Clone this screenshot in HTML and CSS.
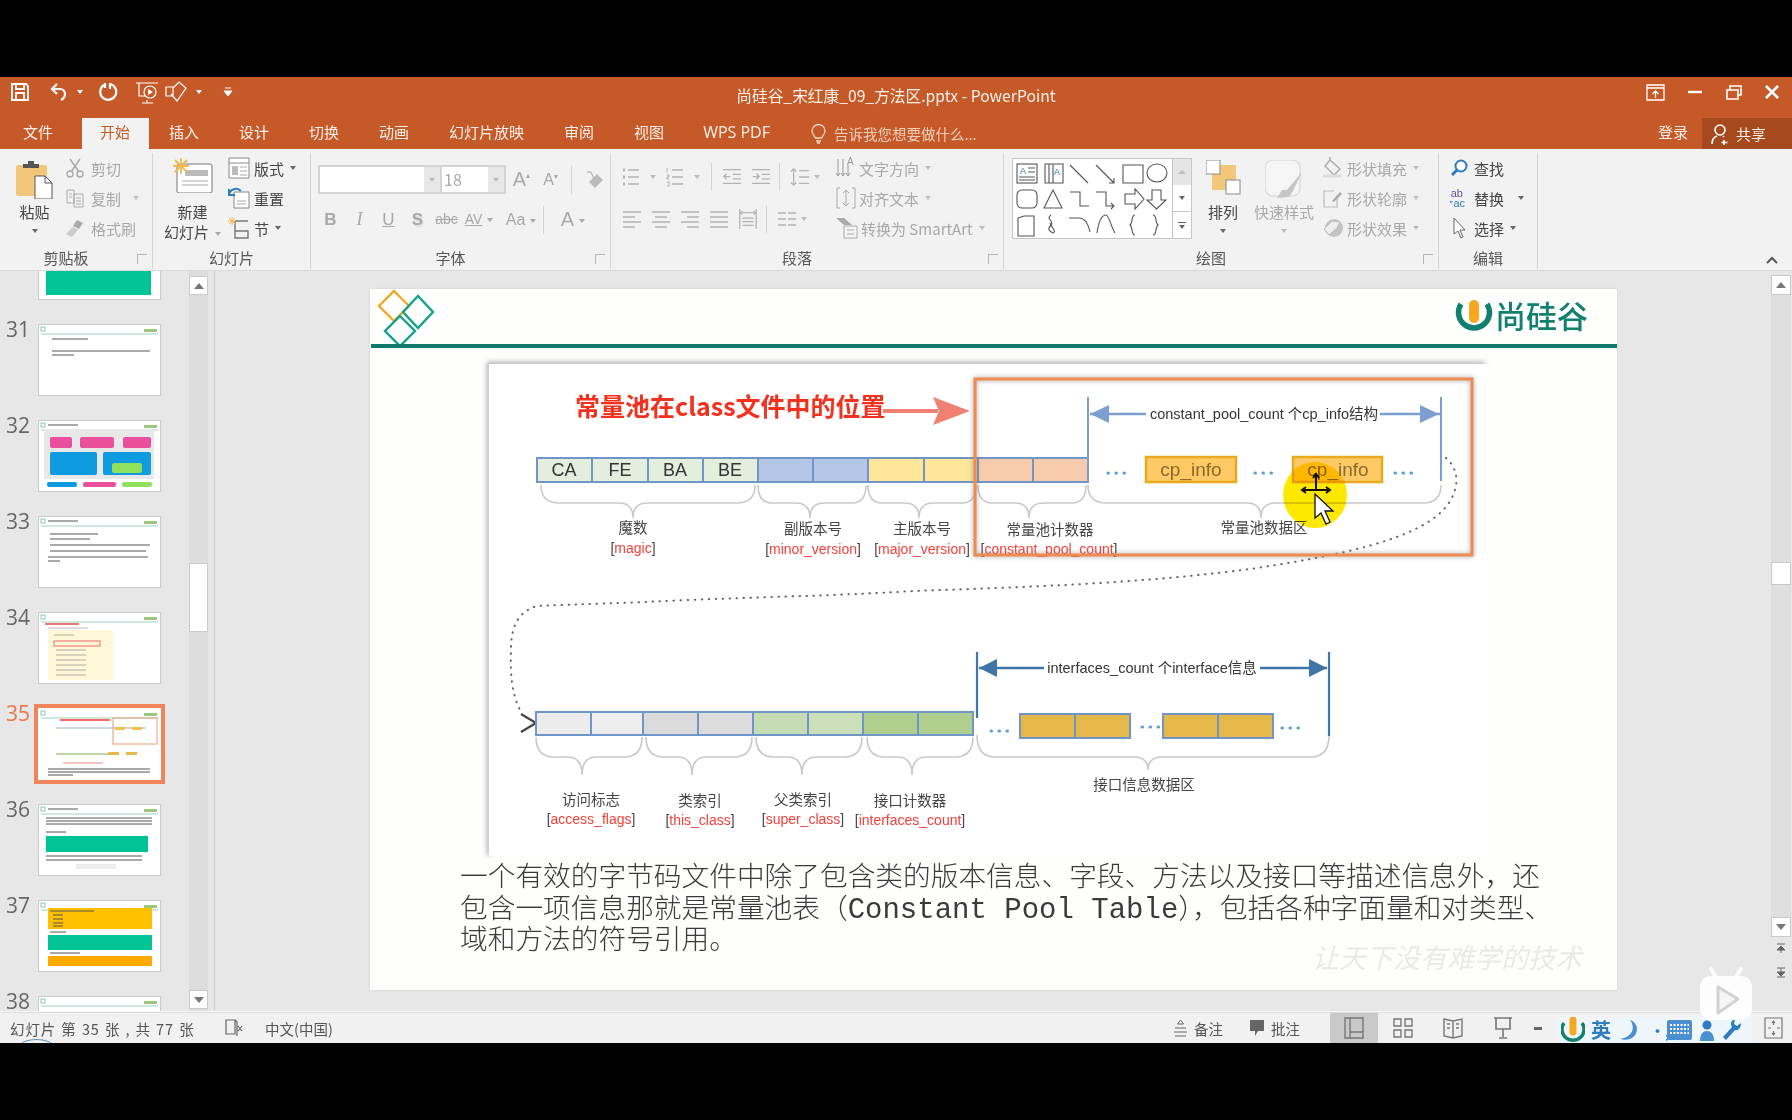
FILE: index.html
```html
<!DOCTYPE html>
<html>
<head>
    <meta charset="UTF-8">
    <title>尚硅谷_宋红康_09_方法区.pptx - PowerPoint</title>
    <link rel="stylesheet" href="styles.css">
</head>
<body>
<svg class="defs" width="0" height="0">
    <symbol id="bullets" viewBox="0 0 20 20"><path d="M2 3h2M2 10h2M2 17h2" stroke-width="3"/><path d="M7 3h11M7 10h11M7 17h11"/></symbol>
    <symbol id="numbers" viewBox="0 0 20 20"><path d="M2 1v4M2 8h2v2H2v2h2M2 15h2v4H2" stroke-width="1"/><path d="M7 3h11M7 10h11M7 17h11"/></symbol>
    <symbol id="outdent" viewBox="0 0 22 20"><path d="M1 2h20M12 7h9M12 12h9M1 17h20"/><path d="M9 9.5H2M5 6.5l-3 3 3 3"/></symbol>
    <symbol id="indent" viewBox="0 0 22 20"><path d="M1 2h20M12 7h9M12 12h9M1 17h20"/><path d="M2 9.5h7M6 6.5l3 3-3 3"/></symbol>
    <symbol id="spacing" viewBox="0 0 22 22"><path d="M10 4h11M10 11h11M10 18h11M4 2v18M1 5l3-3 3 3M1 17l3 3 3-3"/></symbol>
    <symbol id="left" viewBox="0 0 20 20"><path d="M1 3h18M1 8h12M1 13h18M1 18h12"/></symbol>
    <symbol id="center" viewBox="0 0 20 20"><path d="M1 3h18M4 8h12M1 13h18M4 18h12"/></symbol>
    <symbol id="right" viewBox="0 0 20 20"><path d="M1 3h18M7 8h12M1 13h18M7 18h12"/></symbol>
    <symbol id="justify" viewBox="0 0 20 20"><path d="M1 3h18M1 8h18M1 13h18M1 18h18"/></symbol>
    <symbol id="columns" viewBox="0 0 20 20"><path d="M1 4h8M11 4h8M1 10h8M11 10h8M1 16h8M11 16h8"/></symbol>
    <symbol id="distribute" viewBox="0 0 22 24"><path d="M2 1v22M20 1v22M5 5h12M5 3l-2 2 2 2M17 3l2 2-2 2M5 11h12M5 15h12M5 19h12"/></symbol>
    <symbol id="thumb-head" viewBox="0 0 123 72">
        <rect x="3" y="3" width="4" height="4" fill="none" stroke="#8fc9b8"/>
        <path d="M3 10h117" stroke="#bfe0d8" stroke-width="1.4"/>
        <rect x="106" y="5" width="13" height="3" fill="#9bc87a"/>
    </symbol>
</svg>

<div class="screen">
    <div class="band-top"></div>
    <div class="window">
        <div class="titlebar">
            <div class="qat">
                <svg class="qat-icon" width="20" height="20" viewBox="0 0 20 20"><path d="M2 2h14l2 2v14H2zM6 2v5h8V2M6 18v-7h8v7" fill="none" stroke="#fff" stroke-width="1.8"/></svg>
                <svg class="qat-icon undo" width="20" height="20" viewBox="0 0 20 20"><path d="M8 2L3 7l5 5M3 7h8a5 5 0 0 1 5 5c0 3-2 5-4 6" fill="none" stroke="#fff" stroke-width="2.2"/></svg>
                <span class="caret caret-white"></span>
                <svg class="qat-icon redo" width="20" height="20" viewBox="0 0 20 20"><path d="M12 2a8 8 0 1 1-6 1M12 1v6M7 1v5" fill="none" stroke="#fff" stroke-width="2.2"/></svg>
                <svg class="qat-icon present" width="24" height="24" viewBox="0 0 24 24"><path d="M1 3h22M4 3v13h6M12 20v3M7 23h11" fill="none" stroke="#fff" stroke-width="1.2"/><circle cx="15" cy="12" r="6" fill="none" stroke="#fff" stroke-width="1.2"/><path d="M13 9l5 3-5 3z" fill="#fff"/></svg>
                <svg class="qat-icon" width="24" height="24" viewBox="0 0 24 24"><path d="M2 7h7v9H2zM9 8l6-6 7 6-9 13-6-7" fill="none" stroke="#fff" stroke-width="1.2"/></svg>
                <span class="caret caret-white"></span>
                <svg class="qat-icon custom" width="12" height="12" viewBox="0 0 12 12"><path d="M3 2h6M2 5h8l-4 5z" stroke="#fff" fill="#fff"/></svg>
            </div>
            <div class="doc-title">尚硅谷_宋红康_09_方法区.pptx - PowerPoint</div>
            <div class="win-controls">
                <svg width="19" height="17" viewBox="0 0 19 17"><path d="M1 1h17v15H1zM1 4h17M9.5 14V7M6.5 10l3-3 3 3" fill="none" stroke="#fff" stroke-width="1.3"/></svg>
                <svg class="win-min" width="14" height="4" viewBox="0 0 14 4"><path d="M0 2h14" stroke="#fff" stroke-width="2.4"/></svg>
                <svg class="win-max" width="16" height="15" viewBox="0 0 16 15"><path d="M1 5h11v9H1zM4 5V1h11v9h-3" fill="none" stroke="#fff" stroke-width="1.6"/></svg>
                <svg class="win-close" width="14" height="14" viewBox="0 0 14 14"><path d="M1 1l12 12M13 1L1 13" stroke="#fff" stroke-width="2.6"/></svg>
            </div>
        </div>

        <div class="tabs">
            <div class="tab">文件</div>
            <div class="tab tab-active">开始</div>
            <div class="tab">插入</div>
            <div class="tab">设计</div>
            <div class="tab">切换</div>
            <div class="tab">动画</div>
            <div class="tab">幻灯片放映</div>
            <div class="tab">审阅</div>
            <div class="tab">视图</div>
            <div class="tab tab-wps">WPS PDF</div>
            <div class="tell-me">
                <svg width="15" height="20" viewBox="0 0 15 20"><path d="M4.5 14C3 11 1 10 1 7a6.5 6.5 0 0 1 13 0c0 3-2 4-3.5 7zM5 17h5M6 19h3" fill="none" stroke="#f5d9c8" stroke-width="1.3"/></svg>
                <span>告诉我您想要做什么...</span>
            </div>
            <div class="login">登录</div>
            <div class="share">
                <svg width="19" height="22" viewBox="0 0 19 22"><circle cx="9" cy="7" r="5" fill="none" stroke="#fff" stroke-width="1.6"/><path d="M1 21c0-4 2-7 5-8M12 13l1 1M13 17v5M10.5 19.5h6" fill="none" stroke="#fff" stroke-width="1.6"/></svg>
                <span>共享</span>
            </div>
        </div>

        <div class="ribbon">
            <!-- 剪贴板 -->
            <div class="group group-clip">
                <div class="group-body">
                    <div class="big-btn paste">
                        <svg width="37" height="38" viewBox="0 0 37 38"><rect x="0" y="4" width="31" height="31" rx="2" fill="#f3c77a"/><path d="M7 7h16V3h-5V0h-6v3H7z" fill="#555"/><path d="M19 15h10l7 7v16H19z" fill="#fff" stroke="#555"/><path d="M29 15v7h7" fill="none" stroke="#555"/></svg>
                        <span class="big-label paste-label">粘贴</span>
                        <span class="caret big-caret"></span>
                    </div>
                    <div class="small-col clip-col muted">
                        <div class="tool-row"><svg class="tool-icon" width="20" height="20" viewBox="0 0 20 20"><path d="M5 1l9 13M15 1L6 14" stroke="#aaa" stroke-width="1.5"/><circle cx="5" cy="16" r="3" fill="none" stroke="#aaa" stroke-width="1.4"/><circle cx="15" cy="16" r="3" fill="none" stroke="#aaa" stroke-width="1.4"/></svg><span>剪切</span></div>
                        <div class="tool-row"><svg class="tool-icon" width="20" height="20" viewBox="0 0 20 20"><path d="M2 2h7v13H2zM9 6h9v13H9zM4 6h3M4 9h3M11 10h5M11 13h5M11 16h5" fill="none" stroke="#aaa"/></svg><span>复制</span><span class="caret clip-caret"></span></div>
                        <div class="tool-row"><svg class="tool-icon" width="20" height="20" viewBox="0 0 20 20"><path d="M12 2l6 3-4 6-6-3z" fill="#aaa"/><path d="M8 9l5 3-6 7-6-3z" fill="#ccc"/></svg><span>格式刷</span></div>
                    </div>
                </div>
                <div class="group-label label-launch">剪贴板</div>
                <span class="launcher"></span>
            </div>

            <!-- 幻灯片 -->
            <div class="group group-slides">
                <div class="group-body">
                    <div class="big-btn new-slide">
                        <svg width="40" height="35" viewBox="0 0 40 35"><rect x="4" y="6" width="35" height="29" rx="2" fill="#fff" stroke="#777"/><rect x="12" y="12" width="23" height="6" fill="#bbb"/><path d="M9 23h26M9 27h26" stroke="#aaa"/><path d="M8 0v16M0 8h16M2 2l12 12M14 2L2 14" stroke="#f0b952" stroke-width="1.8"/></svg>
                        <span class="big-label new-label">新建</span>
                        <span class="big-label">幻灯片<span class="caret inline-caret"></span></span>
                    </div>
                    <div class="small-col slides-col">
                        <div class="tool-row"><svg class="tool-icon" width="22" height="22" viewBox="0 0 22 22"><path d="M1 1h20v20H1z" fill="#fff" stroke="#888"/><path d="M1 6h20" stroke="#888"/><rect x="4" y="9" width="6" height="9" fill="#bbb"/><path d="M12 10h7M12 14h7M12 18h7" stroke="#aaa"/></svg><span>版式</span><span class="caret"></span></div>
                        <div class="tool-row"><svg class="tool-icon" width="22" height="22" viewBox="0 0 22 22"><path d="M6 5h15v16H6z" fill="#fff" stroke="#888"/><path d="M9 14h9M9 17h9" stroke="#aaa"/><path d="M1 8a7 7 0 0 1 12-4M1 2v6h6" fill="none" stroke="#2e7cc0" stroke-width="2"/></svg><span>重置</span></div>
                        <div class="tool-row"><svg class="tool-icon" width="22" height="22" viewBox="0 0 22 22"><path d="M7 4h13M7 4v17h13v-7H7" fill="none" stroke="#777" stroke-width="1.4"/><path d="M4 0v8M0 4h8M1 1l6 6M7 1L1 7" stroke="#f0b952"/></svg><span>节</span><span class="caret"></span></div>
                    </div>
                </div>
                <div class="group-label">幻灯片</div>
            </div>

            <!-- 字体 -->
            <div class="group group-font muted-icons">
                <div class="group-body font-body">
                    <div class="font-row font-row-top">
                        <div class="combo combo-name"><div class="combo-field"></div><div class="combo-arrow"><span class="caret"></span></div></div>
                        <div class="combo combo-size"><div class="combo-field">18</div><div class="combo-arrow"><span class="caret"></span></div></div>
                        <div class="slot glyph glyph-grow">A<sup>▴</sup></div>
                        <div class="slot glyph glyph-shrink">A<sup>▾</sup></div>
                        <span class="vsep"></span>
                        <div class="slot eraser"><svg width="20" height="20" viewBox="0 0 20 20"><path d="M5 12l8-8 6 6-8 8z" fill="#bbb"/><path d="M3 2h4l3 7" fill="none" stroke="#aaa"/></svg></div>
                    </div>
                    <div class="font-row font-row-bottom">
                        <div class="slot fmt fmt-bold">B</div>
                        <div class="slot fmt fmt-italic">I</div>
                        <div class="slot fmt fmt-under">U</div>
                        <div class="slot fmt fmt-shadow">S</div>
                        <div class="slot fmt fmt-strike">abc</div>
                        <div class="slot fmt fmt-av">AV<span class="caret inline-caret"></span></div>
                        <div class="slot fmt fmt-aa">Aa<span class="caret inline-caret"></span></div>
                        <span class="vsep vsep-tall"></span>
                        <div class="slot fmt fmt-color">A<span class="caret inline-caret"></span></div>
                    </div>
                </div>
                <div class="group-label label-launch">字体</div>
                <span class="launcher"></span>
            </div>

            <!-- 段落 -->
            <div class="group group-para">
                <div class="group-body">
                    <div class="para-left">
                        <div class="para-row para-row-top">
                            <div class="pslot"><svg class="line-icon"><use href="#bullets"/></svg></div><span class="cslot"><span class="caret"></span></span>
                            <div class="pslot"><svg class="line-icon"><use href="#numbers"/></svg></div><span class="cslot"><span class="caret"></span></span>
                            <span class="vsep vsep-para"></span>
                            <div class="pslot pslot-wide"><svg class="line-icon"><use href="#outdent"/></svg></div>
                            <div class="pslot pslot-wide"><svg class="line-icon"><use href="#indent"/></svg></div>
                            <span class="vsep vsep-para"></span>
                            <div class="pslot pslot-wide"><svg class="line-icon"><use href="#spacing"/></svg></div><span class="caret"></span>
                        </div>
                        <div class="para-row para-row-bottom">
                            <div class="pslot pslot-wide"><svg class="line-icon"><use href="#left"/></svg></div>
                            <div class="pslot pslot-wide"><svg class="line-icon"><use href="#center"/></svg></div>
                            <div class="pslot pslot-wide"><svg class="line-icon"><use href="#right"/></svg></div>
                            <div class="pslot pslot-wide"><svg class="line-icon"><use href="#justify"/></svg></div>
                            <div class="pslot pslot-wide"><svg class="line-icon line-tall"><use href="#distribute"/></svg></div>
                            <span class="vsep vsep-para"></span>
                            <div class="pslot pslot-wide"><svg class="line-icon"><use href="#columns"/></svg></div><span class="caret"></span>
                        </div>
                    </div>
                    <div class="small-col para-col muted">
                        <div class="tool-row"><svg class="tool-icon" width="20" height="22" viewBox="0 0 20 22"><path d="M2 2v16M7 2v16M12 8v10M0 16l2 3 2-3M5 16l2 3 2-3M10 16l2 3 2-3" fill="none" stroke="#999"/><text class="mini-a" x="11" y="8">A</text></svg><span>文字方向</span><span class="caret"></span></div>
                        <div class="tool-row"><svg class="tool-icon" width="20" height="22" viewBox="0 0 20 22"><path d="M4 1H1v20h3M16 1h3v20h-3M10 3v16M7 6l3-3 3 3M7 16l3 3 3-3" fill="none" stroke="#aaa"/></svg><span>对齐文本</span><span class="caret"></span></div>
                        <div class="tool-row"><svg class="tool-icon" width="22" height="22" viewBox="0 0 22 22"><path d="M0 1h8l8 7H8z" fill="#aaa"/><path d="M8 9h13v12H8zM11 13h7M11 17h7" fill="#f5f5f5" stroke="#aaa"/></svg><span>转换为 SmartArt</span><span class="caret"></span></div>
                    </div>
                </div>
                <div class="group-label label-launch">段落</div>
                <span class="launcher"></span>
            </div>

            <!-- 绘图 -->
            <div class="group group-draw">
                <div class="group-body">
                    <div class="gallery">
                        <svg class="gallery-shapes" width="160" height="80" viewBox="0 0 160 80">
                            <rect x="4" y="5" width="20" height="19" fill="#fff"/>
                            <text class="mini-blue" x="7" y="15">A</text>
                            <path d="M15 9h7M15 13h7M6 18h16M6 21h16M32 5h18v19H32zM36 5v19M40 5v19M57 6l18 18M83 6l18 18M96 24h5v-5M110 6h20v18h-20z"/>
                            <text class="mini-blue" x="41" y="16">A</text>
                            <ellipse cx="144" cy="14" rx="10" ry="9"/>
                            <rect x="4" y="31" width="20" height="18" rx="5"/>
                            <path d="M40 31l-9 18h18zM57 33h10v14h9M83 33h10v14h8M98 44l3 3-3 3M112 35h10v-5l9 10-9 10v-5h-10zM139 31h9v10h5l-9.5 9-9.5-9h5z"/>
                            <path d="M5 59l6-2h10v20H5zM38 56c-6 4 4 6 0 10s-2 6 2 8c4-2-2-6-3-10M56 59h10c6 0 9 5 11 14M84 74c2-14 6-18 9-18s5 12 9 18M122 56c-4 0-2 8-5 10 3 2 1 10 5 10M140 56c4 0 2 8 5 10-3 2-1 10-5 10"/>
                        </svg>
                        <div class="gallery-spin">
                            <div class="spin spin-up"><span class="tri tri-up"></span></div>
                            <div class="spin spin-mid"><span class="caret"></span></div>
                            <div class="spin spin-more"><span class="more-line"></span><span class="caret"></span></div>
                        </div>
                    </div>
                    <div class="big-btn arrange">
                        <svg width="35" height="35" viewBox="0 0 35 35"><rect x="6" y="5" width="24" height="25" fill="#f3c77a"/><rect x="0" y="0" width="14" height="14" fill="#fff" stroke="#888"/><rect x="20" y="20" width="14" height="14" fill="#fff" stroke="#888"/></svg>
                        <span class="big-label big-label-tight">排列</span>
                        <span class="caret big-caret"></span>
                    </div>
                    <div class="big-btn quick muted">
                        <svg width="38" height="40" viewBox="0 0 38 40"><rect x="0" y="0" width="35" height="36" rx="8" fill="#f5f5f5" stroke="#ddd" stroke-width="1.5"/><path d="M37 12L22 30l-5 0-5 8 12-1 4-6z" fill="#c6c6c6"/></svg>
                        <span class="big-label big-label-tight">快速样式</span>
                        <span class="caret big-caret"></span>
                    </div>
                    <div class="small-col draw-col muted">
                        <div class="tool-row"><svg class="tool-icon" width="22" height="22" viewBox="0 0 22 22"><path d="M8 3l10 9-6 6-9-9zM8 3V0" fill="none" stroke="#aaa" stroke-width="1.4"/><path d="M1 19h18" stroke="#ddd" stroke-width="3"/></svg><span>形状填充</span><span class="caret"></span></div>
                        <div class="tool-row"><svg class="tool-icon" width="22" height="22" viewBox="0 0 22 22"><path d="M12 4H2v16h13V11" fill="none" stroke="#bbb" stroke-width="1.2"/><path d="M10 14l8-9 2 2-8 8z" fill="#aaa"/></svg><span>形状轮廓</span><span class="caret"></span></div>
                        <div class="tool-row"><svg class="tool-icon" width="22" height="22" viewBox="0 0 22 22"><circle cx="12" cy="11" r="9" fill="#c4c4c4"/><path d="M2 12l8-8 8 1-3 6-8 7z" fill="#eee" stroke="#bbb"/></svg><span>形状效果</span><span class="caret"></span></div>
                    </div>
                </div>
                <div class="group-label label-launch">绘图</div>
                <span class="launcher"></span>
            </div>

            <!-- 编辑 -->
            <div class="group group-edit">
                <div class="group-body">
                    <div class="small-col edit-col">
                        <div class="tool-row"><svg class="tool-icon" width="18" height="18" viewBox="0 0 18 18"><circle cx="11" cy="7" r="5.5" fill="#fff" stroke="#2e7cc0" stroke-width="2"/><path d="M7 11l-5 5" stroke="#2e7cc0" stroke-width="3"/></svg><span>查找</span></div>
                        <div class="tool-row"><svg class="tool-icon" width="22" height="22" viewBox="0 0 22 22"><text class="mini-ab" x="2" y="10">ab</text><text class="mini-ac" x="5" y="21">ac</text><path d="M1 15h3M1 15l2 2" stroke="#2e7cc0" fill="none"/></svg><span>替换</span><span class="caret edit-caret"></span></div>
                        <div class="tool-row"><svg class="tool-icon" width="14" height="22" viewBox="0 0 14 22"><path d="M2 1v16l4-3 3 7 2-1-3-7h5z" fill="#fff" stroke="#666"/></svg><span>选择</span><span class="caret"></span></div>
                    </div>
                </div>
                <div class="group-label">编辑</div>
            </div>
            <svg class="collapse" width="12" height="8" viewBox="0 0 12 8"><path d="M1 7l5-5 5 5" fill="none" stroke="#555" stroke-width="2"/></svg>
        </div>

        <div class="workspace">
            <div class="thumb-pane">
                <div class="thumb-list">
                    <div class="thumb-item">
                        <span class="thumb-no"></span>
                        <svg class="thumb" viewBox="0 0 123 72"><rect x="8" y="20" width="105" height="47" fill="#00c496"/></svg>
                    </div>
                    <div class="thumb-item">
                        <span class="thumb-no">31</span>
                        <svg class="thumb" viewBox="0 0 123 72"><use href="#thumb-head"/><path class="tline" d="M14 15h36M14 27h98M14 31h22"/></svg>
                    </div>
                    <div class="thumb-item">
                        <span class="thumb-no">32</span>
                        <svg class="thumb" viewBox="0 0 123 72"><use href="#thumb-head"/><path class="tline" d="M10 5h30"/>
                            <rect x="6" y="9" width="110" height="50" fill="#e8e8e8"/>
                            <rect x="12" y="17" width="22" height="11" rx="2" fill="#ea4f9d"/><rect x="42" y="17" width="34" height="11" rx="2" fill="#ea4f9d"/><rect x="85" y="17" width="28" height="11" rx="2" fill="#ea4f9d"/>
                            <rect x="12" y="32" width="47" height="23" rx="2" fill="#0f9be0"/><rect x="65" y="32" width="48" height="23" rx="2" fill="#0f9be0"/><rect x="74" y="43" width="30" height="10" rx="2" fill="#8fe05c"/>
                            <rect x="9" y="62" width="30" height="5" rx="2" fill="#0f9be0"/><rect x="45" y="62" width="33" height="5" rx="2" fill="#ea4f9d"/><rect x="84" y="62" width="30" height="5" rx="2" fill="#8fe05c"/>
                        </svg>
                    </div>
                    <div class="thumb-item">
                        <span class="thumb-no">33</span>
                        <svg class="thumb" viewBox="0 0 123 72"><use href="#thumb-head"/><path class="tline" d="M10 5h30M12 18h48M12 23h40M12 29h100M12 35h96M10 41h100M10 45h12"/></svg>
                    </div>
                    <div class="thumb-item">
                        <span class="thumb-no">34</span>
                        <svg class="thumb" viewBox="0 0 123 72"><use href="#thumb-head"/><path d="M7 12h34" stroke="#e44" stroke-width="1.5"/><path d="M10 16h40" stroke="#bbb"/>
                            <rect x="10" y="18" width="65" height="50" fill="#fff8d8"/><rect x="16" y="29" width="46" height="5" fill="none" stroke="#e66"/><path class="tline-thin" d="M16 23h20M18 38h30M18 43h30M18 48h30M18 53h30M18 58h30M18 63h30"/>
                        </svg>
                    </div>
                    <div class="thumb-item item-active">
                        <span class="thumb-no">35</span>
                        <svg class="thumb thumb-active" viewBox="0 0 123 72"><use href="#thumb-head"/>
                            <path d="M22 12h50" stroke="#f33" stroke-width="1.4"/>
                            <path d="M18 20h90" stroke="#bcd" stroke-width="1.6"/><rect x="75" y="10" width="44" height="26" fill="none" stroke="#ee9a70"/><rect x="77" y="19" width="10" height="3" fill="#f5c04a"/><rect x="94" y="19" width="10" height="3" fill="#f5c04a"/>
                            <path d="M18 46h60" stroke="#a5cc85" stroke-width="1.6"/><rect x="70" y="44" width="11" height="3" fill="#e5b84a"/><rect x="88" y="44" width="11" height="3" fill="#e5b84a"/>
                            <path d="M25 55h40" stroke="#e88" stroke-width="1"/>
                            <path class="tline" d="M10 61h102M10 64h102M10 67h25"/>
                        </svg>
                    </div>
                    <div class="thumb-item">
                        <span class="thumb-no">36</span>
                        <svg class="thumb" viewBox="0 0 123 72"><use href="#thumb-head"/><path class="tline" d="M10 5h30M8 14h106M8 17h106M8 20h106M8 28h20M8 52h96M8 56h96"/>
                            <rect x="8" y="32" width="102" height="16" fill="#00c496"/><rect x="38" y="60" width="40" height="5" fill="#eee"/>
                        </svg>
                    </div>
                    <div class="thumb-item">
                        <span class="thumb-no">37</span>
                        <svg class="thumb" viewBox="0 0 123 72"><use href="#thumb-head"/><rect x="10" y="8" width="104" height="21" fill="#ffc000"/><path class="tline" d="M12 11h44M15 15h10M15 19h10M15 23h10M15 26h10M12 32h16"/><rect x="10" y="35" width="104" height="15" fill="#00c496"/><path class="tline" d="M12 53h30"/><rect x="10" y="56" width="104" height="10" fill="#ffa800"/></svg>
                    </div>
                    <div class="thumb-item">
                        <span class="thumb-no">38</span>
                        <svg class="thumb" viewBox="0 0 123 72"><use href="#thumb-head"/></svg>
                    </div>
                </div>
                <div class="pane-scroll">
                    <div class="scroll-btn"><span class="tri tri-up"></span></div>
                    <div class="pane-scroll-track"><div class="pane-scroll-thumb"></div></div>
                    <div class="scroll-btn"><span class="tri tri-down"></span></div>
                </div>
            </div>

            <div class="stage">
                <div class="slide">
                    <svg class="diagram" width="1247" height="701" viewBox="370 289 1247 701">
                        <defs>
                            <filter id="soft" x="-5%" y="-5%" width="110%" height="110%"><feGaussianBlur stdDeviation="2.5"/></filter>
                        </defs>
                        <!-- 页眉 -->
                        <g fill="none" stroke-width="2.4">
                            <path d="M394 291l15 15-15 15-15-15z" stroke="#f0a928"/>
                            <path d="M418 296l15 16-15 16-15-16z" stroke="#14a08e"/>
                            <path d="M400 316l15 15-15 15-15-15z" stroke="#14a08e"/>
                        </g>
                        <path d="M371 346h1246" stroke="#0f7a6b" stroke-width="4"/>
                        <path d="M1461 304a15.500 15.500 0 1 0 26 0" fill="none" stroke="#11806f" stroke-width="5.500"/>
                        <path d="M1474 305v13" stroke="#f5a820" stroke-width="10" stroke-linecap="round"/>
                        <text class="logo-text" x="1495" y="328">尚硅谷</text>

                        <!-- 图片底板 -->
                        <path d="M489 855V364h996" fill="none" stroke="#888" stroke-width="3" filter="url(#soft)"/>
                        <rect x="489" y="364" width="1000" height="492" fill="#fff"/>

                        <text class="red-title" x="575" y="416">常量池在class文件中的位置</text>
                        <path d="M883 411h55" stroke="#f08072" stroke-width="4"/>
                        <path d="M933 397l37 14-37 14 6-14z" fill="#f08072"/>

                        <!-- 第一行字节 -->
                        <g class="cells">
                            <rect x="537" y="458" width="55" height="24" fill="#e3eedd"/><rect x="592" y="458" width="56" height="24" fill="#e3eedd"/><rect x="648" y="458" width="55" height="24" fill="#e3eedd"/><rect x="703" y="458" width="55" height="24" fill="#e3eedd"/>
                            <rect x="758" y="458" width="55" height="24" fill="#b4c7e7"/><rect x="813" y="458" width="55" height="24" fill="#b4c7e7"/>
                            <rect x="868" y="458" width="56" height="24" fill="#ffe699"/><rect x="924" y="458" width="54" height="24" fill="#ffe699"/>
                            <rect x="978" y="458" width="55" height="24" fill="#f8cbad"/><rect x="1033" y="458" width="55" height="24" fill="#f8cbad"/>
                        </g>
                        <g class="cell-text">
                            <text x="564" y="476">CA</text><text x="620" y="476">FE</text><text x="675" y="476">BA</text><text x="730" y="476">BE</text>
                        </g>
                        <g class="brace">
                            <path d="M541 485Q541 503 559 503H619Q633 503 633 518Q633 503 647 503H737Q755 503 755 485"/>
                            <path d="M758 485Q758 503 772 503H796Q810 503 810 518Q810 503 824 503H852Q866 503 866 485"/>
                            <path d="M868 485Q868 503 882 503H905Q919 503 919 518Q919 503 933 503H962Q976 503 976 485"/>
                            <path d="M978 485Q978 503 992 503H1015Q1029 503 1029 518Q1029 503 1043 503H1072Q1086 503 1086 485"/>
                            <path d="M1088 485Q1088 503 1106 503H1247Q1261 503 1261 518Q1261 503 1275 503H1423Q1441 503 1441 485"/>
                            <path d="M536 737Q536 757 554 757H568Q582 757 582 775Q582 757 596 757H624Q642 757 642 737"/>
                            <path d="M646 737Q646 757 664 757H678Q692 757 692 775Q692 757 706 757H734Q752 757 752 737"/>
                            <path d="M756 737Q756 757 774 757H788Q802 757 802 775Q802 757 816 757H844Q862 757 862 737"/>
                            <path d="M867 737Q867 757 885 757H898Q912 757 912 775Q912 757 926 757H955Q973 757 973 737"/>
                            <path d="M977 735Q977 757 995 757H1134Q1148 757 1148 770Q1148 757 1162 757H1311Q1329 757 1329 735"/>
                        </g>
                        <g class="cap">
                            <text x="633" y="533">魔数</text><text x="813" y="534">副版本号</text><text x="922" y="534">主版本号</text><text x="1050" y="535">常量池计数器</text><text x="1264" y="533">常量池数据区</text>
                            <text x="591" y="805">访问标志</text><text x="700" y="806">类索引</text><text x="803" y="805">父类索引</text><text x="910" y="806">接口计数器</text><text x="1144" y="790">接口信息数据区</text>
                        </g>
                        <g class="code">
                            <text x="633" y="553">[<tspan>magic</tspan>]</text><text x="813" y="554">[<tspan>minor_version</tspan>]</text><text x="922" y="554">[<tspan>major_version</tspan>]</text><text x="1049" y="554">[<tspan>constant_pool_count</tspan>]</text>
                            <text x="591" y="824">[<tspan>access_flags</tspan>]</text><text x="700" y="825">[<tspan>this_class</tspan>]</text><text x="803" y="824">[<tspan>super_class</tspan>]</text><text x="910" y="825">[<tspan>interfaces_count</tspan>]</text>
                        </g>

                        <!-- cp_info -->
                        <path d="M1088 397v84M1441 397v84" stroke="#7ba0d0" stroke-width="2"/>
                        <path d="M1090 414h350" stroke="#7ba0d0" stroke-width="2.5"/>
                        <path d="M1090 414l19-9v18zM1439 414l-19-9v18z" fill="#7ba0d0"/>
                        <rect x="1146" y="404" width="234" height="20" fill="#fff"/>
                        <text class="span-label" x="1264" y="419">constant_pool_count 个cp_info结构</text>
                        <rect class="cp" x="1146" y="457" width="90" height="25"/>
                        <rect class="cp" x="1293" y="457" width="89" height="25"/>
                        <text class="cp-text" x="1191" y="476">cp_info</text>
                        <text class="cp-text" x="1338" y="476">cp_info</text>
                        <path class="dots" d="M1108 473h20M1255 473h20M1395 473h20M991 731h20M1142 727h19M1282 728h20"/>

                        <!-- 虚线 -->
                        <path class="link" d="M1446 458C1460 470 1460 490 1445 508C1417 540 1340 555 1257 568C1150 583 1030 587 914 591C830 596 760 597 686 600C630 603 580 604 537 606C516 612 511 630 511 650C510 675 512 695 521 712"/>
                        <path d="M521 714l15 9-15 9" fill="none" stroke="#444" stroke-width="2.2"/>

                        <!-- 第二行 -->
                        <g class="cells">
                            <rect x="536" y="712" width="55" height="23" fill="#ececec"/><rect x="591" y="712" width="52" height="23" fill="#eeeeee"/>
                            <rect x="643" y="712" width="55" height="23" fill="#dbdbdb"/><rect x="698" y="712" width="55" height="23" fill="#dddddd"/>
                            <rect x="753" y="712" width="55" height="23" fill="#c6dcb4"/><rect x="808" y="712" width="55" height="23" fill="#cbdfba"/>
                            <rect x="863" y="712" width="55" height="23" fill="#aecf8e"/><rect x="918" y="712" width="55" height="23" fill="#aecf8e"/>
                        </g>
                        <path d="M977 652v66M1329 652v84" stroke="#3f75a8" stroke-width="2.2"/>
                        <path d="M979 668h348" stroke="#3f75a8" stroke-width="2.4"/>
                        <path d="M979 668l18-9v18zM1327 668l-18-9v18z" fill="#3f75a8"/>
                        <rect x="1044" y="658" width="216" height="20" fill="#fff"/>
                        <text class="span-label" x="1152" y="673">interfaces_count 个interface信息</text>
                        <g class="cells cells-iface">
                            <rect x="1020" y="714" width="55" height="24"/><rect x="1075" y="714" width="55" height="24"/>
                            <rect x="1163" y="714" width="55" height="24"/><rect x="1218" y="714" width="55" height="24"/>
                        </g>

                        <!-- 红框 -->
                        <rect x="975" y="379" width="497" height="176" fill="none" stroke="#777" stroke-width="3" filter="url(#soft)" opacity=".7"/>
                        <rect class="frame" x="975" y="379" width="497" height="176"/>

                        <text class="watermark" x="1312" y="968">让天下没有难学的技术</text>

                        <!-- 鼠标 -->
                        <ellipse class="spot" cx="1315" cy="495" rx="32" ry="33"/>
                        <path d="M1316 489v-14M1316 490h-13M1316 490h12M1313 478l3-4 3 4M1306 487l-4 3 4 3M1326 487l4 3-4 3" fill="none" stroke="#111" stroke-width="2"/>
                        <path d="M1315 494v24l6-5 5 11 4-2-5-11h8z" fill="#fff" stroke="#111" stroke-width="1.3"/>
                    </svg>
                    <div class="slide-text">
                        <div class="slide-line">一个有效的字节码文件中除了包含类的版本信息、字段、方法以及接口等描述信息外，还</div>
                        <div class="slide-line">包含一项信息那就是常量池表（<span class="mono">Constant Pool Table</span>），包括各种字面量和对类型、</div>
                        <div class="slide-line">域和方法的符号引用。</div>
                    </div>
                </div>
            </div>

            <div class="main-scroll">
                <div class="scroll-btn"><span class="tri tri-up"></span></div>
                <div class="main-scroll-track"><div class="main-scroll-thumb"></div></div>
                <div class="scroll-btn"><span class="tri tri-down"></span></div>
                <svg class="page-arrows" width="12" height="36" viewBox="0 0 12 36"><path d="M2 1h8M6 3L2 7h8zM6 7v3" fill="#666" stroke="#666"/><path d="M2 34h8M6 33l-4-4h8zM6 29v-4M2 25h8" fill="#666" stroke="#666"/></svg>
            </div>
        </div>

        <div class="statusbar">
            <span class="status-count">幻灯片 第 35 张 , 共 77 张</span>
            <svg class="status-book" width="18" height="20" viewBox="0 0 18 20"><path d="M1 2h9v14H1zM10 2l2 2v14M13 8l4 5M17 8l-4 5" fill="none" stroke="#666" stroke-width="1.2"/></svg>
            <span class="status-lang">中文(中国)</span>
            <div class="status-right">
                <div class="status-item"><svg width="15" height="18" viewBox="0 0 15 18"><path d="M7.5 1l3 4h-6zM2 9h11M1 13h13M2 17h11" fill="none" stroke="#666"/></svg><span>备注</span></div>
                <div class="status-item status-comment"><svg width="16" height="18" viewBox="0 0 16 18"><path d="M1 1h14v11H9l-3 5v-5H1z" fill="#666"/></svg><span>批注</span></div>
                <div class="view-btn view-active"><svg width="20" height="22" viewBox="0 0 20 22"><path d="M1 1h18v20H1zM6 1v20M6 15h13" fill="none" stroke="#777" stroke-width="1.4"/></svg></div>
                <div class="view-btn"><svg width="20" height="20" viewBox="0 0 20 20"><path d="M1 1h7v7H1zM12 1h7v7h-7zM1 12h7v7H1zM12 12h7v7h-7z" fill="none" stroke="#777" stroke-width="1.4"/></svg></div>
                <div class="view-btn"><svg width="20" height="22" viewBox="0 0 20 22"><path d="M1 2l9 2 9-2v17l-9 2-9-2zM10 4v17M4 7h3M4 11h3M13 7h3M13 11h3" fill="none" stroke="#777" stroke-width="1.4"/></svg></div>
                <div class="view-btn"><svg width="20" height="22" viewBox="0 0 20 22"><path d="M1 1h18M3 1v11h14V1M10 12v8M6 21h8" fill="none" stroke="#777" stroke-width="1.6"/></svg></div>
                <span class="zoom-minus"></span>
                <svg class="status-fit" width="19" height="22" viewBox="0 0 19 22"><path d="M1 1h17v20H1zM9.5 4v4M8 6l1.500-2 1.500 2M9.500 18v-4M8 16l1.500 2 1.500-2M4 11h3M13 11h3" fill="none" stroke="#777" stroke-width="1.2"/></svg>
            </div>
        </div>

        <!-- 悬浮在窗口上的输入法和播放按钮 -->
        <div class="ime-bar">
            <svg width="24" height="26" viewBox="0 0 24 26"><path d="M3 6a11 11 0 1 0 18 0" fill="none" stroke="#11806f" stroke-width="3.500"/><path d="M12 3v12" stroke="#f5a820" stroke-width="7" stroke-linecap="round"/></svg>
            <span class="ime-lang">英</span>
            <svg class="ime-moon" width="18" height="22" viewBox="0 0 18 22"><path d="M11 1c6 8 2 17-10 19 10 3 17-3 17-10 0-4-3-8-7-9z" fill="#4a90d0"/></svg>
            <span class="ime-punct">•,</span>
            <svg class="ime-keys" width="25" height="20" viewBox="0 0 25 20"><rect width="25" height="20" rx="2" fill="#4a90d0"/><path d="M3 5h19M3 9h19M3 13h19" stroke="#fff" stroke-width="1.8" stroke-dasharray="2 1.500"/></svg>
            <svg class="ime-user" width="14" height="21" viewBox="0 0 14 21"><circle cx="7" cy="5" r="4.500" fill="#2e7cc0"/><path d="M0 21c0-7 3-10 7-10s7 3 7 10z" fill="#4a90d0"/></svg>
            <svg class="ime-tool" width="18" height="22" viewBox="0 0 18 22"><path d="M12 0c-4 1-5 5-3 8L0 18l3 3 9-10c3 1 6-2 6-7l-4 3-3-2z" fill="#2e7cc0"/></svg>
        </div>
        <svg class="play-badge" width="60" height="60" viewBox="0 0 60 60">
            <path d="M20 16L15 8M40 16l5-8" stroke="#fff" stroke-width="4" stroke-linecap="round" opacity=".85"/>
            <rect x="4" y="15" width="52" height="44" rx="11" fill="#fff" fill-opacity=".92"/>
            <path d="M22 26l20 12-20 14z" fill="#f6f6f6" stroke="#d2d2d2" stroke-width="3" stroke-linejoin="round"/>
        </svg>
        <span class="status-arc"></span>
    </div>
    <div class="band-bottom"></div>
</div>
</body>
</html>
```

FILE: styles.css
```css
* {
    box-sizing: border-box;
}

html, body {
    margin: 0;
    height: 100%;
    background: #000;
    overflow: hidden;
}

body {
    font-family: "Noto Sans CJK SC", "Noto Sans", sans-serif;
    font-size: 15px;
    color: #444;
}

.defs {
    position: absolute;
}

.screen {
    display: flex;
    flex-direction: column;
    height: 1120px;
}

.band-top {
    height: 77px;
    background: #000;
}

.band-bottom {
    flex: 1;
    background: #000;
}

.window {
    position: relative;
    height: 966px;
    display: flex;
    flex-direction: column;
    background: #e6e7e6;
    overflow: hidden;
    filter: blur(0.5px);
}

/* title bar */
.titlebar {
    height: 41px;
    padding-bottom: 14px;
    background: #c55a28;
    display: grid;
    grid-template-columns: 1fr auto 1fr;
    align-items: center;
    color: #fff;
}

.qat {
    display: flex;
    align-items: center;
    padding-left: 10px;
}

.qat .undo {
    margin-left: 19px;
}

.qat .caret-white {
    margin-left: 8px;
}

.qat .redo {
    margin-left: 15px;
}

.qat .present {
    margin-left: 17px;
}

.qat .qat-icon:nth-of-type(5) {
    margin-left: 5px;
}

.qat .custom {
    margin-left: 20px;
}

.doc-title {
    font-size: 15.700px;
    line-height: 22px;
    margin-top: 8px;
    color: #fdf0e8;
}

.win-controls {
    display: flex;
    justify-content: flex-end;
    align-items: center;
    padding-right: 13px;
}

.win-min {
    margin-left: 23px;
}

.win-max {
    margin-left: 24px;
}

.win-close {
    margin-left: 23px;
}

/* tabs */
.tabs {
    height: 31px;
    background: #c55a28;
    display: flex;
    align-items: stretch;
    padding-left: 3px;
    color: #fdf0e8;
    font-size: 15px;
}

.tab {
    padding: 0 20px;
    line-height: 28px;
}

.tab-active {
    padding: 0 18px;
    margin-left: 9px;
    width: 67px;
    background: #f1f2f1;
    color: #c55a28;
}

.tab-wps {
    padding: 0 16px 0 19px;
    font-family: "Open Sans", sans-serif;
    font-size: 16px;
}

.tell-me {
    display: flex;
    align-items: center;
    gap: 8px;
    margin-left: 25px;
    color: #f3cfba;
    font-size: 14.500px;
}

.login {
    margin-left: auto;
    line-height: 28px;
    padding-right: 14px;
}

.share {
    width: 90px;
    background: #a64a1e;
    display: flex;
    align-items: center;
    gap: 6px;
    padding-left: 9px;
}

/* ribbon */
.ribbon {
    position: relative;
    height: 122px;
    background: #f1f2f1;
    display: flex;
    padding: 4px 0 1px;
    border-bottom: 1px solid #d9dad9;
}

.group {
    position: relative;
    display: flex;
    flex-direction: column;
    border-right: 1px solid #d5d6d5;
}

.group-clip { width: 153px; }
.group-slides { width: 158px; }
.group-font { width: 300px; }
.group-para { width: 393px; }
.group-draw { width: 435px; }
.group-edit { width: 99px; }

.group-body {
    flex: 1;
    display: flex;
    min-height: 0;
}

.group-label {
    height: 22px;
    line-height: 22px;
    text-align: center;
    color: #555;
    font-size: 15px;
}

.label-launch {
    padding-right: 20px;
}

.launcher {
    position: absolute;
    right: 5px;
    bottom: 5px;
    width: 10px;
    height: 10px;
    border: 1px solid #b5b5b5;
    border-width: 1px 0 0 1px;
}

.caret {
    display: inline-block;
    width: 0;
    height: 0;
    margin-left: 6px;
    border-left: 3.500px solid transparent;
    border-right: 3.500px solid transparent;
    border-top: 4px solid #666;
}

.caret-white {
    border-top-color: #fff;
}

.inline-caret {
    vertical-align: middle;
    border-top-color: #aaa;
}

.big-btn {
    display: flex;
    flex-direction: column;
    align-items: center;
    line-height: 20px;
    white-space: nowrap;
}

.big-caret {
    margin: 7px 0 0;
}

.big-label-tight {
    margin-top: 7px;
}

.paste {
    width: 37px;
    margin-left: 16px;
    padding-top: 8px;
}

.paste-label {
    margin-top: 3px;
}

.new-slide {
    width: 65px;
    margin-left: 7px;
    padding-top: 5px;
}

.new-label {
    margin-top: 9px;
}

.small-col {
    display: flex;
    flex-direction: column;
}

.tool-row {
    display: flex;
    align-items: center;
    height: 30px;
    white-space: nowrap;
}

.muted, .muted .big-label {
    color: #a8a8a8;
}

.muted .caret {
    border-top-color: #bbb;
}

.clip-col {
    margin-left: 12px;
}

.clip-col .tool-icon {
    margin-right: 6px;
}

.clip-caret {
    margin-left: 12px;
}

.slides-col {
    margin-left: 3px;
}

.slides-col .tool-icon {
    margin-right: 4px;
}

/* font group */
.font-body {
    flex-direction: column;
    padding-left: 7px;
}

.font-row {
    display: flex;
    align-items: center;
    height: 29px;
}

.font-row-top {
    margin-top: 12px;
}

.font-row-bottom {
    margin-top: 11px;
    margin-left: -2px;
}

.combo {
    display: flex;
    height: 29px;
    border: 2px solid #d3d4d3;
}

.combo-name {
    width: 124px;
}

.combo-size {
    width: 64px;
    border-left: 0;
}

.combo-field {
    flex: 1;
    background: #fff;
    padding-left: 2px;
    line-height: 24px;
    font-size: 16px;
    color: #a8a8a8;
}

.combo-arrow {
    width: 16px;
    display: flex;
    align-items: center;
    justify-content: center;
    background: #e6e7e6;
}

.combo-arrow .caret {
    margin: 0;
    border-top-color: #bbb;
}

.slot {
    width: 29px;
    text-align: center;
    flex: none;
    color: #a8a8a8;
}

.glyph {
    font-family: "Liberation Sans", sans-serif;
    line-height: 29px;
}

.glyph sup {
    font-size: 8px;
    line-height: 0;
}

.glyph-grow {
    margin-left: 1px;
    font-size: 20px;
}

.glyph-shrink {
    font-size: 16px;
}

.vsep {
    width: 1px;
    height: 28px;
    background: #d3d4d3;
    flex: none;
    margin-left: 6px;
}

.eraser {
    margin-left: 7px;
    height: 20px;
}

.fmt {
    font-family: "Liberation Sans", sans-serif;
    font-size: 17px;
    line-height: 29px;
    white-space: nowrap;
}

.fmt-bold { font-weight: 700; }
.fmt-italic { font-style: italic; font-family: "Liberation Serif", serif; font-size: 18px; }
.fmt-under { text-decoration: underline; }
.fmt-shadow { font-weight: 700; text-shadow: 1px 2px 1px #ddd; }
.fmt-strike { font-size: 14px; text-decoration: line-through; }

.fmt-av {
    width: 36px;
    font-size: 14px;
    text-decoration: underline;
}

.fmt-aa {
    margin-left: 5px;
    width: 38px;
    font-size: 16px;
}

.fmt-color {
    width: 46px;
    font-size: 20px;
    margin-left: 6px;
}

.vsep-tall {
    margin-left: 3px;
}

.fmt .inline-caret {
    margin-left: 5px;
}

/* paragraph group */
.para-left {
    width: 225px;
    padding-left: 8px;
    flex: none;
}

.para-row {
    display: flex;
    align-items: center;
    height: 28px;
}

.para-row-top {
    margin-top: 10px;
}

.para-row-bottom {
    margin-top: 14px;
    margin-left: -2px;
}

.pslot {
    width: 24px;
    height: 24px;
    display: flex;
    align-items: center;
    justify-content: center;
    flex: none;
}

.pslot-wide {
    width: 29px;
}

.cslot {
    width: 20px;
    display: flex;
    justify-content: center;
    flex: none;
}

.cslot .caret, .para-row > .caret {
    margin: 0;
    border-top-color: #bbb;
}

.vsep-para {
    margin: 0 5px 0 4px;
}

.line-icon {
    width: 20px;
    height: 20px;
    fill: none;
    stroke: #b3b3b3;
    stroke-width: 1.400;
}

.line-tall {
    height: 24px;
}

.para-col .tool-icon {
    margin-right: 3px;
    flex: none;
}

.para-col {
    margin-left: 0;
}

.mini-a {
    font: 10px "Liberation Sans", sans-serif;
    fill: #999;
}

/* drawing group */
.group-draw .group-body {
    padding-left: 8px;
}

.gallery {
    display: flex;
    width: 180px;
    height: 81px;
    margin-top: 5px;
    background: #fff;
    border: 1px solid #c6c7c6;
    flex: none;
}

.gallery-shapes {
    fill: none;
    stroke: #555;
    stroke-width: 1.100;
}

.mini-blue {
    font: 9px "Liberation Sans", sans-serif;
    fill: #2e7cc0;
    stroke: none;
}

.gallery-spin {
    width: 19px;
    flex: none;
    display: flex;
    flex-direction: column;
    border-left: 1px solid #c6c7c6;
    margin-left: -1px;
}

.spin {
    flex: 1;
    display: flex;
    flex-direction: column;
    align-items: center;
    justify-content: center;
    gap: 2px;
}

.spin-up {
    background: #e4e5e4;
}

.spin-mid {
    border-bottom: 1px solid #c6c7c6;
}

.spin .caret {
    margin: 0;
}

.more-line {
    width: 8px;
    height: 1px;
    background: #666;
}

.tri {
    display: block;
    width: 0;
    height: 0;
    border-left: 5px solid transparent;
    border-right: 5px solid transparent;
}

.tri-up {
    border-bottom: 6px solid #777;
}

.tri-down {
    border-top: 6px solid #777;
}

.spin-up .tri-up {
    border-left-width: 4px;
    border-right-width: 4px;
    border-bottom: 4px solid #c0c0c0;
}

.arrange {
    width: 36px;
    margin-left: 13px;
    padding-top: 7px;
}

.quick {
    width: 68px;
    margin-left: 9px;
    padding-top: 7px;
}

.quick .big-label-tight {
    margin-top: 2px;
}

.draw-col {
    margin-left: 4px;
}

.draw-col .tool-icon {
    margin-right: 3px;
}

/* edit group */
.edit-col {
    padding-left: 10px;
}

.edit-col .tool-row svg {
    width: 20px;
    margin-right: 5px;
    flex: none;
}

.edit-caret {
    margin-left: 14px;
}

.mini-ab, .mini-ac {
    font: 12px "Liberation Sans", sans-serif;
}

.mini-ab { fill: #6a4fa0; }
.mini-ac { fill: #2e7cc0; }

.collapse {
    position: absolute;
    right: 14px;
    bottom: 6px;
}

/* workspace */
.workspace {
    flex: 1;
    min-height: 0;
    display: flex;
    border-bottom: 1px solid #f7f7f7;
}

.thumb-pane {
    position: relative;
    width: 215px;
    flex: none;
    display: flex;
    border-right: 1px solid #d0d1d0;
    overflow: hidden;
}

.thumb-list {
    width: 189px;
    flex: none;
    margin-top: -43px;
    display: flex;
    flex-direction: column;
    gap: 24px;
}

.thumb-item {
    display: flex;
    height: 72px;
}

.thumb-no {
    width: 38px;
    padding-left: 6px;
    font-family: "Open Sans", sans-serif;
    font-size: 21px;
    line-height: 18px;
    margin-top: -4px;
    color: #666;
    flex: none;
}

.item-active .thumb-no {
    color: #e8744a;
}

.thumb {
    width: 123px;
    height: 72px;
    background: #fff;
    outline: 1px solid #c9cac9;
    outline-offset: -1px;
    flex: none;
}

.thumb-active {
    outline: 4px solid #f0845a;
    outline-offset: 0;
}

.tline {
    fill: none;
    stroke: #555;
    stroke-width: 1;
}

.tline-thin {
    fill: none;
    stroke: #999;
    stroke-width: 0.800;
}

.pane-scroll {
    width: 19px;
    flex: none;
    display: flex;
    flex-direction: column;
    background: #dcdddc;
    padding: 5px 0 2px;
}

.scroll-btn {
    height: 19px;
    background: #fff;
    border: 1px solid #c9cac9;
    display: flex;
    align-items: center;
    justify-content: center;
    flex: none;
}

.pane-scroll-track {
    flex: 1;
    padding-top: 268px;
}

.pane-scroll-thumb {
    height: 69px;
    background: #fff;
    border: 1px solid #c9cac9;
}

.stage {
    flex: 1;
    min-width: 0;
    padding: 18px 0 0 155px;
}

.slide {
    position: relative;
    width: 1247px;
    height: 701px;
    background: #fefefd;
    box-shadow: 0 0 2px #c9cac9;
}

.diagram {
    display: block;
}

.logo-text {
    font-size: 31px;
    font-weight: 500;
    fill: #11806f;
}

.red-title {
    font-size: 25px;
    font-weight: 700;
    fill: #f4301e;
}

.cells rect {
    stroke: #6f96c6;
    stroke-width: 2;
}

.cells-iface rect {
    fill: #e5b84a;
}

.cell-text text {
    font-family: "Liberation Sans", sans-serif;
    font-size: 18px;
    fill: #333;
    text-anchor: middle;
}

.brace path {
    fill: none;
    stroke: #c9c9c9;
    stroke-width: 1.600;
}

.cap text {
    font-size: 14.500px;
    fill: #444;
    text-anchor: middle;
}

.code text {
    font-family: "Liberation Sans", "Noto Sans CJK SC", sans-serif;
    font-size: 14px;
    fill: #444;
    text-anchor: middle;
}

.code tspan {
    fill: #f5403a;
}

.span-label {
    font-family: "Liberation Sans", "Noto Sans CJK SC", sans-serif;
    font-size: 14.500px;
    fill: #333;
    text-anchor: middle;
}

.cp {
    fill: #ffc966;
    stroke: #e8a820;
    stroke-width: 2.500;
}

.cp-text {
    font-family: "Liberation Sans", sans-serif;
    font-size: 19px;
    fill: #8a6a2a;
    text-anchor: middle;
}

.dots {
    fill: none;
    stroke: #5b9bd5;
    stroke-width: 3;
    stroke-linecap: round;
    stroke-dasharray: 0.500 7.500;
}

.link {
    fill: none;
    stroke: #666;
    stroke-width: 2;
    stroke-linecap: round;
    stroke-dasharray: 0.500 6.500;
}

.frame {
    fill: none;
    stroke: #f08a50;
    stroke-width: 3;
}

.watermark {
    font-size: 27px;
    fill: #e9e9e7;
    font-style: italic;
}

.spot {
    fill: #ffe800;
    mix-blend-mode: multiply;
}

.slide-text {
    position: absolute;
    left: 90px;
    top: 570px;
    width: 1100px;
    font-size: 27.700px;
    font-weight: 300;
    color: #3a3a3a;
    white-space: nowrap;
}

.slide-line {
    height: 31.500px;
    line-height: 31.500px;
}

.mono {
    font-family: "Liberation Mono", monospace;
    font-size: 29px;
    line-height: 1;
}

.main-scroll {
    width: 25px;
    flex: none;
    display: flex;
    flex-direction: column;
    align-items: center;
    padding: 4px 0 0 2px;
}

.main-scroll .scroll-btn {
    width: 20px;
    height: 20px;
}

.main-scroll-track {
    width: 20px;
    height: 622px;
    padding-top: 267px;
    background: #dedfde;
}

.main-scroll-thumb {
    height: 23px;
    background: #fff;
    border: 1px solid #c9cac9;
}

.page-arrows {
    margin-top: 6px;
}

/* status bar */
.statusbar {
    height: 31px;
    background: #f1f1f1;
    display: flex;
    align-items: center;
    padding-left: 10px;
    color: #555;
    font-size: 14.500px;
    border-top: 1px solid #dcdddc;
}

.status-count {
    width: 215px;
    white-space: nowrap;
    letter-spacing: 0.900px;
    word-spacing: 1px;
}

.status-book {
    flex: none;
}

.status-lang {
    margin-left: 22px;
}

.status-right {
    margin-left: auto;
    display: flex;
    align-items: center;
    height: 100%;
}

.status-item {
    display: flex;
    align-items: center;
    gap: 6px;
}

.status-comment {
    margin: 0 30px 0 26px;
}

.view-btn {
    width: 50px;
    height: 100%;
    display: flex;
    align-items: center;
    justify-content: center;
}

.view-active {
    width: 48px;
    background: #c8c9c8;
}

.zoom-minus {
    width: 8px;
    height: 3px;
    margin-left: 6px;
    background: #666;
}

.status-fit {
    margin: 0 9px 0 222px;
}

.ime-bar {
    position: absolute;
    left: 1558px;
    top: 940px;
    width: 194px;
    height: 26px;
    background: #eef6fb;
    display: flex;
    align-items: center;
    padding-left: 3px;
}

.ime-lang {
    margin-left: 6px;
    font-size: 20px;
    font-weight: 700;
    line-height: 26px;
    color: #2e7cc0;
}

.ime-moon {
    margin-left: 8px;
}

.ime-punct {
    margin-left: 13px;
    width: 11px;
    font-weight: 700;
    color: #2e7cc0;
}

.ime-keys {
    margin-left: 6px;
}

.ime-user {
    margin-left: 8px;
}

.ime-tool {
    margin-left: 9px;
}

.play-badge {
    position: absolute;
    left: 1696px;
    top: 884px;
}

.status-arc {
    position: absolute;
    left: 20px;
    top: 962px;
    width: 33px;
    height: 14px;
    border: 1px solid #5b8fc0;
    border-radius: 50%;
}
```
